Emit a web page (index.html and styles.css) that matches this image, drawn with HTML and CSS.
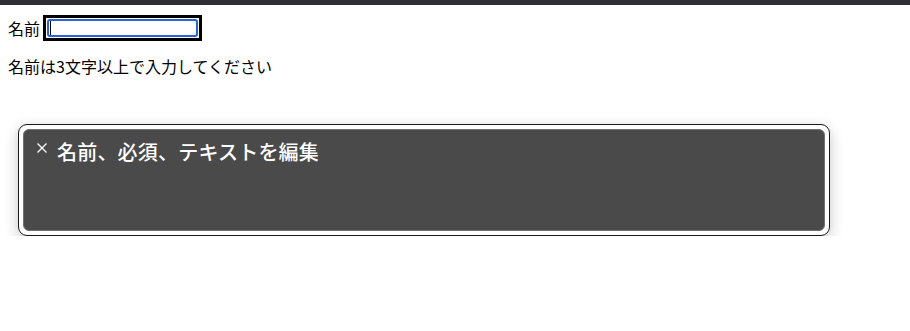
FILE: index.html
```html
<!DOCTYPE html>
<html lang="ja">
<head>
<meta charset="utf-8">
<link rel="stylesheet" href="styles.css">
</head>
<body>
<div class="topbar"></div>
<div class="content">
  <div class="row">
    <span class="label">名前</span>
    <span class="field"><span class="field-inner"><span class="caret"></span></span></span>
  </div>
  <p class="hint">名前は3文字以上で入力してください</p>
  <div class="panel">
    <div class="panel-inner">
      <svg class="close" width="10" height="10" viewBox="0 0 10 10"><path d="M0.5 0.5 L9.5 9.5 M9.5 0.5 L0.5 9.5" stroke="#ffffff" stroke-width="1.3" fill="none"/></svg>
      <span class="title">名前、必須、テキストを編集</span>
    </div>
  </div>
</div>
</body>
</html>
```
FILE: styles.css
```css
html, body {
  margin: 0;
  padding: 0;
  background: #ffffff;
}
body {
  font-family: "Noto Sans CJK JP", "Noto Sans", sans-serif;
  color: #000000;
}
.topbar {
  height: 5px;
  background: #2f2f31;
}
.content {
  padding: 0 8px;
}
.row {
  display: flex;
  align-items: center;
  gap: 3px;
  margin-top: 10px;
}
.label {
  font-size: 16px;
  line-height: 24px;
}
.field {
  box-sizing: border-box;
  width: 159px;
  height: 26px;
  border: 3px solid #000000;
  padding: 1px;
  background: #ffffff;
  display: flex;
}
.field-inner {
  flex: 1;
  border: 2px solid #2b62d6;
  border-radius: 3px;
  display: flex;
  align-items: center;
}
.caret {
  width: 1px;
  height: 14px;
  background: #000000;
  margin-left: 1px;
}
.hint {
  margin: 13px 0 0;
  font-size: 16px;
  line-height: 24px;
}
.panel {
  box-sizing: border-box;
  margin: 46px 0 0 10px;
  width: 812px;
  height: 112px;
  border: 1px solid #1a1a1a;
  border-radius: 9px;
  background: #ffffff;
  padding: 4px;
  box-shadow: 0 4px 14px rgba(0, 0, 0, 0.22);
}
.panel-inner {
  box-sizing: border-box;
  height: 100%;
  background: #4a4a4a;
  border: 1px solid #707070;
  border-radius: 6px;
  padding: 8px 0 0 13px;
  display: flex;
  align-items: flex-start;
  gap: 10px;
}
.close {
  display: block;
  margin-top: 5px;
  flex: none;
}
.title {
  color: #ffffff;
  font-size: 20px;
  line-height: 28px;
  font-weight: 500;
  letter-spacing: 0.2px;
}
```
